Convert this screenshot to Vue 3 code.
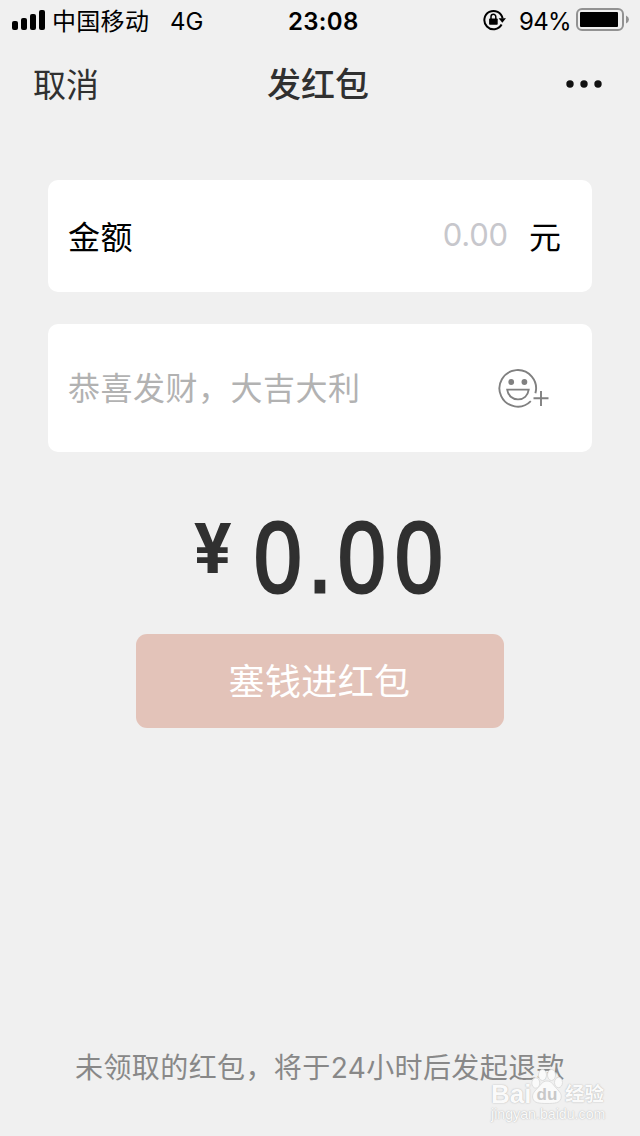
<script setup>
import { ref } from 'vue'

const amount = ref('')
const message = ref('')
const signalBars = [9, 12, 16, 20]
</script>

<template>
  <div class="page">
    <header class="status">
      <div class="signal">
        <i v-for="bar in signalBars" :key="bar" :style="{ height: bar + 'px' }"></i>
      </div>
      <span class="carrier">中国移动</span>
      <span class="network">4G</span>
      <span class="time">23:08</span>
      <svg class="lock" width="24" height="22" viewBox="0 0 24 22">
        <path d="M18.6 15.6A9.2 9.2 0 1 1 19.6 9.5" fill="none" stroke="#000" stroke-width="2" />
        <path d="M15.6 9.2h7.4l-3.7 4.6z" />
        <rect x="6.1" y="9.4" width="8.6" height="6.4" rx="0.8" />
        <path d="M8 10V7.7a2.4 2.4 0 0 1 4.8 0V10" fill="none" stroke="#000" stroke-width="1.5" />
      </svg>
      <span class="percent">94%</span>
      <svg class="battery" width="54" height="24" viewBox="0 0 54 24">
        <rect x="1" y="1" width="46" height="21" rx="5" fill="none" stroke="#929292" stroke-width="2" />
        <rect x="4" y="4" width="38" height="15" rx="1" />
        <path d="M50 7.6q3 1.4 3 3.9t-3 3.9z" fill="#929292" />
      </svg>
    </header>

    <nav class="nav">
      <span class="cancel">取消</span>
      <h1>发红包</h1>
      <svg class="more" width="38" height="10" viewBox="0 0 38 10">
        <circle cx="5" cy="5" r="3.7" />
        <circle cx="19" cy="5" r="3.7" />
        <circle cx="33" cy="5" r="3.7" />
      </svg>
    </nav>

    <main>
      <label class="card amount">
        <span class="label">金额</span>
        <input v-model="amount" placeholder="0.00" />
        <span class="unit">元</span>
      </label>

      <label class="card message">
        <input v-model="message" placeholder="恭喜发财，大吉大利" />
        <svg class="emoji" width="52" height="42" viewBox="0 0 52 42" fill="none" stroke="#808080" stroke-width="1.9">
          <path d="M32.8 34.2A18.3 18.3 0 1 1 37.4 26.2" />
          <circle cx="13.2" cy="15" r="2.9" fill="#808080" stroke="none" />
          <circle cx="26.4" cy="15" r="2.9" fill="#808080" stroke="none" />
          <path d="M9.2 22.6h21.5c-.8 6-5 9.8-10.7 9.8S10 28.6 9.2 22.6z" />
          <path d="M43 24v15M35.5 31.2h15" />
        </svg>
      </label>

      <div class="total">
        <span class="yen">¥</span>
        <span class="value"><span class="whole">0.</span>00</span>
      </div>

      <button type="button">塞钱进红包</button>
    </main>

    <footer>未领取的红包，将于24小时后发起退款</footer>

    <div class="watermark">
      <div class="brand">
        <span class="bai">Bai</span>
        <svg width="32" height="37" viewBox="0 0 32 37">
          <g fill="#fafafa" stroke="#dedede" stroke-width="1">
            <ellipse cx="4.8" cy="15" rx="4" ry="5.2" />
            <ellipse cx="11.5" cy="7" rx="4" ry="5.5" />
            <ellipse cx="20.5" cy="7" rx="4" ry="5.5" />
            <ellipse cx="27.5" cy="14.5" rx="4" ry="5.2" />
            <path d="M16 13c5 0 6.5 4.5 9.5 7.5 3.5 3.5 5.5 6 4.5 10-1.2 4.5-6 5-14 5S3 35 1.8 30.5c-1-4 1-6.5 4.5-10C9.5 17.5 11 13 16 13z" />
          </g>
          <text x="16" y="32" text-anchor="middle">du</text>
        </svg>
        <span class="jingyan">经验</span>
      </div>
      <div class="url">jingyan.baidu.com</div>
    </div>
  </div>
</template>

<style>
body {
  margin: 0;
  background: #f0f0f0;
}
</style>

<style scoped>
.page {
  position: relative;
  display: flex;
  flex-direction: column;
  box-sizing: border-box;
  width: 640px;
  height: 1136px;
  overflow: hidden;
  background: #f0f0f0;
  color: #000;
  font-family: Inter, 'Noto Sans CJK SC', sans-serif;
}
.status {
  display: flex;
  align-items: center;
  height: 40px;
  padding-left: 12px;
  font-size: 24px;
  line-height: 40px;
  white-space: nowrap;
}
.status span {
  padding-top: 3px;
}
.signal {
  display: flex;
  align-items: flex-end;
  gap: 3px;
  height: 20px;
  width: 40px;
}
.signal i {
  width: 6px;
  border-radius: 2px;
  background: #000;
}
.carrier {
  width: 118px;
  letter-spacing: 0.3px;
}
.network {
  width: 118px;
}
.time {
  width: 195px;
  font-weight: 600;
  letter-spacing: 0.3px;
}
.percent {
  width: 57px;
  margin-left: 12px;
  letter-spacing: -0.7px;
}
.nav {
  display: grid;
  grid-template-columns: 1fr auto 1fr;
  align-items: center;
  height: 88px;
  padding: 0 37px 0 33px;
  color: #303030;
  line-height: 48px;
}
.cancel {
  padding-top: 2px;
  font-size: 33px;
}
h1 {
  margin: 0;
  padding-top: 2px;
  font-size: 34px;
  font-weight: 500;
}
.more {
  justify-self: end;
  fill: #111;
}
main {
  display: flex;
  flex-direction: column;
  padding: 52px 48px 0;
}
.card {
  display: flex;
  align-items: center;
  box-sizing: border-box;
  padding: 0 32px 0 20px;
  border-radius: 10px;
  background: #fff;
  font-size: 32px;
}
.amount {
  height: 112px;
  padding-right: 31px;
  padding-bottom: 3px;
}
.label {
  letter-spacing: 0.5px;
}
.message {
  height: 128px;
  margin-top: 32px;
  padding-right: 42px;
}
input {
  flex: 1;
  min-width: 0;
  padding: 0;
  border: 0;
  outline: 0;
  background: none;
  font: inherit;
}
.amount input {
  margin-right: 21px;
  font-size: 31px;
  letter-spacing: -0.2px;
  text-align: right;
}
.amount input::placeholder {
  color: #c7c7cc;
}
.message input {
  letter-spacing: 0.5px;
}
.message input::placeholder {
  color: #b2b2b2;
}
.total {
  display: flex;
  height: 182px;
  padding-left: 146px;
  color: #303030;
}
.yen {
  width: 40px;
  padding-top: 55px;
  margin-right: 20px;
  font-family: Roboto, sans-serif;
  font-size: 70px;
  font-weight: 700;
  line-height: 84px;
}
/* narrow upright figures */
.value {
  padding-top: 45px;
  font-family: 'Liberation Sans', sans-serif;
  font-size: 101px;
  line-height: 120px;
  letter-spacing: 10.9px;
  transform: scaleX(0.85);
  transform-origin: left;
  -webkit-text-stroke: 3px #303030;
}
.whole {
  letter-spacing: 7.3px;
}
button {
  align-self: center;
  width: 368px;
  height: 94px;
  padding: 0 1px 4px 0;
  border: 0;
  border-radius: 11px;
  background: #e3c3b9;
  color: #fff;
  font-family: inherit;
  font-size: 36px;
  letter-spacing: 0.4px;
}
footer {
  margin-top: auto;
  padding-bottom: 47px;
  color: #888;
  font-size: 28px;
  letter-spacing: 0.4px;
  line-height: 42px;
  text-align: center;
}
/* site mark laid over the bottom right corner */
.watermark {
  position: absolute;
  left: 491px;
  top: 1068px;
  width: 120px;
  color: #fafafa;
  font-family: 'Liberation Sans', 'Noto Sans CJK SC', sans-serif;
  text-shadow: 0 0 1px #bbb, 0 0 2px #ccc;
}
.brand {
  display: flex;
  align-items: flex-end;
  height: 37px;
  font-weight: 700;
  white-space: nowrap;
}
.bai {
  width: 40px;
  font-size: 26px;
  line-height: 22px;
}
.brand svg text {
  fill: #c8c8c8;
  font-size: 17px;
  text-shadow: none;
}
.jingyan {
  margin-left: 2px;
  font-size: 19.5px;
  line-height: 21px;
}
.url {
  font-size: 14.2px;
  line-height: 18px;
}
</style>
